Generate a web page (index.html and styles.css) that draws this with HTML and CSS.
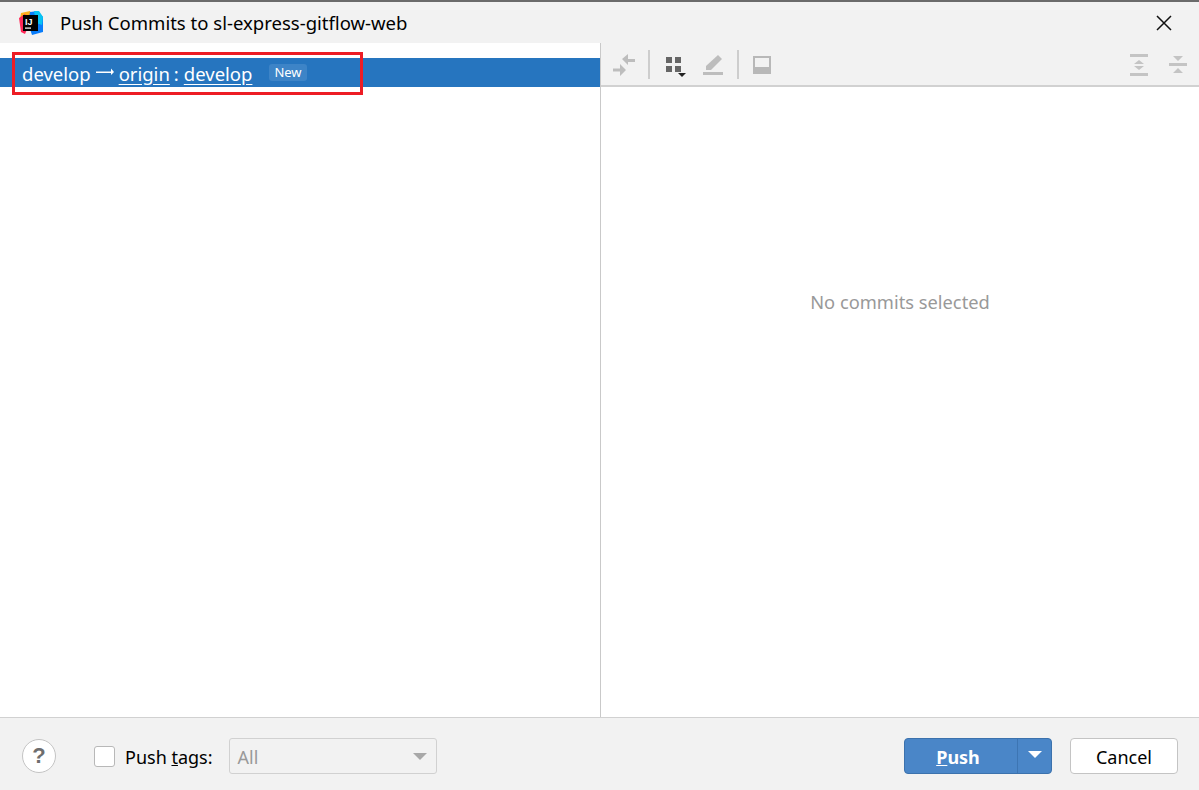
FILE: index.html
```html
<!DOCTYPE html>
<html lang="en">
<head>
<meta charset="utf-8">
<title>Push Commits</title>
<link rel="stylesheet" href="styles.css">
</head>
<body>
<div class="dialog">
  <header class="titlebar">
    <svg class="app-icon" width="24" height="24" viewBox="0 0 24 24">
      <path d="M2 2 L11 0 L14 8 L5 12 L1 8Z" fill="#fcb01d"/>
      <path d="M0 7 L6 3 L10 14 L6 23 L2 21Z" fill="#fe2857"/>
      <path d="M11 1 L19 0 L24 6 L24 21 L13 24 L9 12Z" fill="#087cfa"/>
      <path d="M15 0 L20 0 L24 6 L23 14 L17 12Z" fill="#07c3f2"/>
      <rect x="4" y="4" width="15" height="16" fill="#000"/>
      <rect x="6" y="16.500" width="6" height="1.200" fill="#fff"/>
      <text class="icon-text" x="6" y="13.500">IJ</text>
    </svg>
    <span class="title">Push Commits to sl-express-gitflow-web</span>
    <svg class="close" width="16" height="16" viewBox="0 0 16 16"><path d="M1 1 L15 15 M15 1 L1 15" stroke="#111" stroke-width="1.500" fill="none"/></svg>
  </header>
  <main class="content">
    <section class="left">
      <div class="branch-row">
        <span class="row-text">develop</span>
        <svg class="arrow" width="18" height="9" viewBox="0 0 18 9"><path d="M0 3.500 H15 V0.500 L18 4 L15 7 V5 H0Z" fill="#fff"/></svg>
        <a class="link row-text">origin</a>
        <span class="colon row-text">:</span>
        <a class="link row-text">develop</a>
        <span class="badge">New</span>
      </div>
    </section>
    <section class="right">
      <div class="toolbar">
        <svg class="tool" width="24" height="24" viewBox="0 0 24 24" fill="#bdbdbd"><path d="M10 7 L16 2 V7 H23 V10 H16 V13Z"/><path d="M14 18 L8 12 V16.500 H1 V19.500 H8 V24Z"/></svg>
        <span class="sep"></span>
        <svg class="tool" width="24" height="25" viewBox="0 0 24 25"><path d="M4 5h6v6H4zM13 5h6v6h-6zM4 14h6v6H4zM13 14h6v6h-6z" fill="#666"/><path d="M16 21h8l-4 4z" fill="#222"/></svg>
        <svg class="tool t-gap" width="24" height="24" viewBox="0 0 24 24" fill="#bdbdbd"><path d="M5 18 V14 L17 3 L21 7 L10 18Z"/><rect x="2" y="20" width="20" height="3"/></svg>
        <span class="sep"></span>
        <svg class="tool" width="24" height="24" viewBox="0 0 24 24"><rect x="2" y="4" width="18" height="18" fill="#b8b8b8"/><rect x="4" y="6" width="14" height="9" fill="#f2f2f2"/></svg>
        <span class="spacer"></span>
        <svg class="tool t-end" width="24" height="24" viewBox="0 0 24 24" fill="#c4c4c4"><rect x="2" y="2" width="18" height="3"/><rect x="2" y="21" width="18" height="3"/><path d="M11 8 L16 12 H6Z M11 18 L6 14 H16Z"/></svg>
        <svg class="tool" width="24" height="24" viewBox="0 0 24 24" fill="#c4c4c4"><rect x="3" y="11" width="18" height="3"/><path d="M7 4 H17 L12 9Z M7 21 H17 L12 16Z"/></svg>
      </div>
      <div class="details">No commits selected</div>
    </section>
    <div class="highlight"></div>
  </main>
  <footer class="footer">
    <button class="help">?</button>
    <label class="tags"><span class="check"></span><span class="foot-text">Push <u>t</u>ags:</span></label>
    <div class="select"><span class="foot-text">All</span><i class="caret-grey"></i></div>
    <span class="spacer"></span>
    <div class="push">
      <span class="push-main"><span class="foot-text"><u>P</u>ush</span></span>
      <span class="push-drop"><i class="caret-white"></i></span>
    </div>
    <button class="cancel"><span class="foot-text">Cancel</span></button>
  </footer>
</div>
</body>
</html>
```

FILE: styles.css
```css
* { box-sizing: border-box; }
html, body { margin: 0; height: 100%; }
body { font-family: "Noto Sans", "Open Sans", sans-serif; background: #f2f2f2; color: #000; overflow: hidden; }
.dialog { width: 1199px; height: 790px; display: flex; flex-direction: column; border-top: 2px solid #6b6b6b; }

.titlebar { height: 41px; flex: none; display: flex; align-items: center; padding: 0 27px 0 19px; background: #f2f2f2; }
.app-icon { flex: none; margin-top: 1px; }
.icon-text { font: bold 9px "Liberation Sans", sans-serif; fill: #fff; }
.title { margin-left: 17px; font-size: 18.55px; line-height: 24px; flex: 1; }
.close { flex: none; }

.content { flex: 1; display: flex; position: relative; min-height: 0; }
.left { width: 600px; background: #fff; padding-top: 15px; }
.branch-row { height: 29px; background: #2675bf; color: #fff; display: flex; align-items: center; padding-left: 22px; font-size: 18.5px; line-height: 29px; white-space: nowrap; }
.row-text { padding-top: 1px; }
.arrow { margin: 0 5px; }
.link { text-decoration: underline; text-underline-offset: 3px; }
.colon { margin: 0 5px 0 4px; }
.badge { margin-left: 17px; background: #3d84c7; border-radius: 3px; font-size: 13px; line-height: 17px; padding: 0 5px; height: 17px; }

.right { flex: 1; display: flex; flex-direction: column; border-left: 1px solid #c9c9c9; background: #fff; }
.toolbar { height: 44px; flex: none; display: flex; align-items: center; background: #f2f2f2; border-bottom: 2px solid #d1d1d1; padding-left: 11px; padding-right: 9px; }
.tool { flex: none; overflow: visible; }
.t-gap { margin-left: 15px; }
.sep { width: 2px; height: 29px; background: #cdcdcd; margin: 0 12px; flex: none; }
.t-end { margin-right: 14px; }
.spacer { flex: 1; }
.details { flex: 1; display: flex; align-items: center; justify-content: center; color: #999; font-size: 18.3px; padding-bottom: 202px; }

.highlight { position: absolute; left: 12px; top: 9px; width: 351px; height: 43px; border: 3px solid #ed1c24; pointer-events: none; }

.footer { height: 73px; flex: none; display: flex; align-items: center; padding: 4px 21px 0 22px; border-top: 1px solid #d1d1d1; background: #f2f2f2; font-size: 18px; }
.foot-text { display: inline-block; padding-top: 2px; }
.help { width: 34px; height: 34px; border-radius: 50%; border: 1px solid #c4c4c4; background: #fff; font: bold 22px "Liberation Sans", sans-serif; color: #6e6e6e; padding: 0; flex: none; }
.tags { display: flex; align-items: center; margin-left: 38px; }
.check { width: 21px; height: 21px; border: 1px solid #b8b8b8; border-radius: 3px; background: #fff; margin-right: 10px; }
.select { width: 208px; height: 36px; margin-left: 16px; border: 1px solid #d1d1d1; border-radius: 3px; display: flex; align-items: center; justify-content: space-between; padding: 0 9px 0 8px; color: #999; }
.caret-grey { width: 0; height: 0; border-left: 7px solid transparent; border-right: 7px solid transparent; border-top: 7px solid #a8a8a8; }
.push { width: 148px; height: 36px; display: flex; background: #4a86c8; border: 1px solid #3c72ad; border-radius: 4px; color: #fff; font-weight: 700; }
.push-main { flex: 1; display: flex; align-items: center; justify-content: center; padding-right: 6px; }
.push-drop { width: 34px; display: flex; align-items: center; justify-content: center; border-left: 1px solid #3d75b3; padding-bottom: 4px; }
.caret-white { width: 0; height: 0; border-left: 7px solid transparent; border-right: 7px solid transparent; border-top: 7px solid #fff; }
.cancel { width: 108px; height: 36px; margin-left: 18px; background: #fff; border: 1px solid #c4c4c4; border-radius: 4px; font: inherit; color: #000; padding: 0; }
```
